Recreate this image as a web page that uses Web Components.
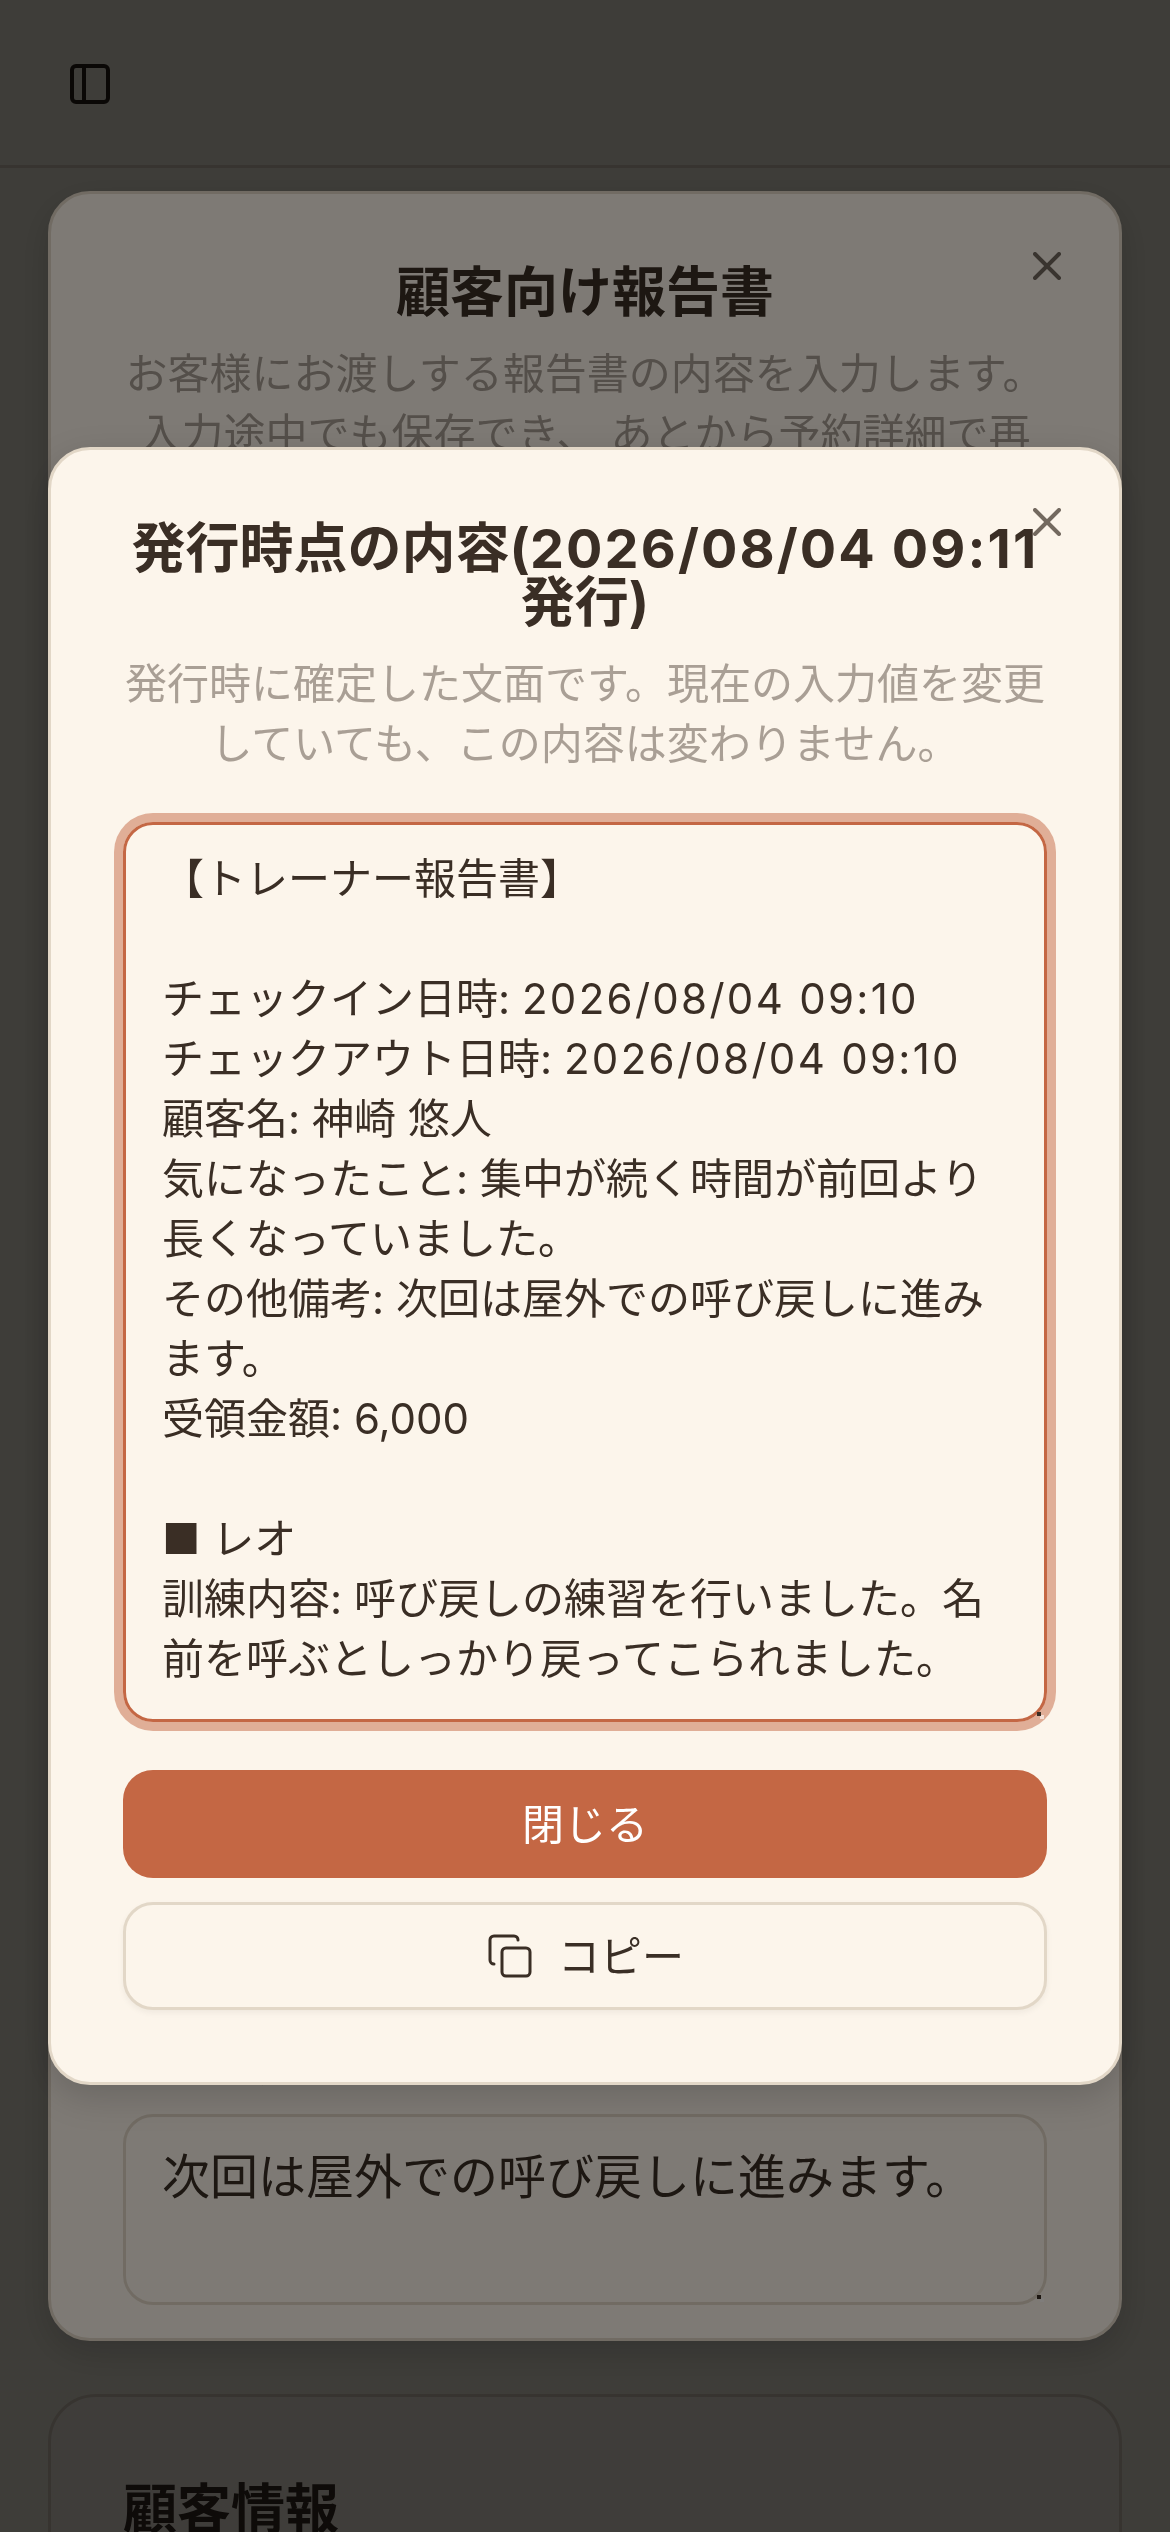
<!DOCTYPE html>
<html lang="ja">
<head>
<meta charset="utf-8">
<title>顧客向け報告書</title>
<style>
  html, body { margin: 0; height: 100%; }
  body {
    background: #faf6e6;
    color: #3a2e25;
    font-family: Inter, "Noto Sans CJK JP", sans-serif;
    overflow: hidden;
  }
  /* 日時の数字だけ少し広げる */
  .dt { letter-spacing: 2.3px; }
</style>
</head>
<body>
<app-bar></app-bar>

<page-main>
  <section-card title-text="顧客情報"></section-card>
</page-main>

<!-- 下のダイアログ -->
<modal-layer>
  <report-dialog tall heading="顧客向け報告書" lead="お客様にお渡しする報告書の内容を入力します。入力途中でも保存でき、 あとから予約詳細で再度確認できます。">
    <note-field label="その他備考">次回は屋外での呼び戻しに進みます。</note-field>
  </report-dialog>
</modal-layer>

<!-- 上のダイアログ -->
<modal-layer>
  <report-dialog heading='発行時点の内容(<span style="letter-spacing:2.1px">2026/08/04 09:11</span> 発行)' lead="発行時に確定した文面です。現在の入力値を変更していても、この内容は変わりません。">
    <snapshot-box>【トレーナー報告書】

チェックイン日時: <span class="dt">2026/08/04 09:10</span>
チェックアウト日時: <span class="dt">2026/08/04 09:10</span>
顧客名: 神崎 悠人
気になったこと: 集中が続く時間が前回より長くなっていました。
その他備考: 次回は屋外での呼び戻しに進みます。
受領金額: 6,000

■ レオ
訓練内容: 呼び戻しの練習を行いました。名前を呼ぶとしっかり戻ってこられました。</snapshot-box>
    <action-button primary>閉じる</action-button>
    <action-button copy>コピー</action-button>
  </report-dialog>
</modal-layer>

<script>
class AppBar extends HTMLElement {
  connectedCallback() {
    this.attachShadow({ mode: 'open' }).innerHTML = `
      <style>
        :host { display: flex; align-items: center; height: 165px; padding-left: 66px; border-bottom: 3px solid #ddd2c2; }
        svg { width: 48px; height: 48px; display: block; margin-top: 3px; }
      </style>
      <svg viewBox="0 0 24 24" fill="none" stroke="#2b211a" stroke-width="2" stroke-linecap="round" stroke-linejoin="round">
        <rect x="3" y="3" width="18" height="18" rx="2"/><path d="M9 3v18"/>
      </svg>`;
  }
}

class PageMain extends HTMLElement {
  connectedCallback() {
    this.attachShadow({ mode: 'open' }).innerHTML = `
      <style>
        :host { display: block; padding: 0 48px; }
        .space { height: 2226px; }
      </style>
      <div class="space"></div>
      <slot></slot>`;
  }
}

class SectionCard extends HTMLElement {
  connectedCallback() {
    this.attachShadow({ mode: 'open' }).innerHTML = `
      <style>
        :host { display: block; background: #fcf5eb; border: 3px solid #ddd2c2; border-radius: 48px; padding: 72px; }
        h2 { margin: 0; font-size: 54px; line-height: 81px; font-weight: 700; color: #3a2e25; }
      </style>
      <h2>${this.getAttribute('title-text')}</h2>`;
  }
}

class ModalLayer extends HTMLElement {
  connectedCallback() {
    this.attachShadow({ mode: 'open' }).innerHTML = `
      <style>
        :host { position: fixed; inset: 0; display: flex; align-items: center; justify-content: center; background: rgba(0,0,0,.5); }
      </style>
      <slot></slot>`;
  }
}

class ReportDialog extends HTMLElement {
  connectedCallback() {
    const tall = this.hasAttribute('tall');
    this.attachShadow({ mode: 'open' }).innerHTML = `
      <style>
        :host {
          display: flex; flex-direction: column; position: relative; box-sizing: border-box;
          width: 1074px; ${tall ? 'height: 2150px; padding-bottom: 33px;' : 'padding-bottom: 72px;'}
          padding-top: 72px; padding-left: 72px; padding-right: 72px;
          background: #fcf5eb; border: 3px solid #e2d7c7; border-radius: 42px;
          box-shadow: 0 12px 36px rgba(0,0,0,.16);
          overflow: hidden;
        }
        h2 { margin: 0 0 24px; font-size: 54px; line-height: 54px; font-weight: 700; text-align: center; color: #3a2e25; }
        p { margin: 0 0 48px; font-size: 42px; line-height: 60px; text-align: center; color: #a99f95; }
        .close { position: absolute; top: 48px; right: 48px; width: 48px; height: 48px; opacity: .7; }
        .fill { flex: 1; }
        .stack { display: flex; flex-direction: column; }
      </style>
      <h2>${this.getAttribute('heading')}</h2>
      <p>${this.getAttribute('lead')}</p>
      ${tall ? '<div class="fill"></div>' : ''}
      <div class="stack"><slot></slot></div>
      <svg class="close" viewBox="0 0 24 24" fill="none" stroke="#3a2e25" stroke-width="2" stroke-linecap="round">
        <path d="M18 6 6 18"/><path d="m6 6 12 12"/>
      </svg>`;
  }
}

class NoteField extends HTMLElement {
  connectedCallback() {
    this.attachShadow({ mode: 'open' }).innerHTML = `
      <style>
        :host { display: block; }
        label { display: block; font-size: 42px; line-height: 60px; font-weight: 700; margin-bottom: 18px; color: #3a2e25; }
        .box { position: relative; box-sizing: border-box; height: 191px; padding: 24px 36px; border: 3px solid #e2d7c7; border-radius: 30px; font-size: 48px; line-height: 72px; color: #3a2e25; }
        .grip { position: absolute; right: 3px; bottom: 3px; width: 4px; height: 4px; background: #3a2e25; box-shadow: 3px 3px 0 rgba(255,255,255,.6); }
      </style>
      <label>${this.getAttribute('label')}</label>
      <div class="box"><slot></slot><span class="grip"></span></div>`;
  }
}

class SnapshotBox extends HTMLElement {
  connectedCallback() {
    this.attachShadow({ mode: 'open' }).innerHTML = `
      <style>
        :host {
          display: block; position: relative; box-sizing: border-box; height: 900px;
          margin-bottom: 48px; padding: 24px 36px;
          border: 3px solid #c46744; border-radius: 30px;
          box-shadow: 0 0 0 9px rgba(196,103,68,.5);
          font-size: 42px; line-height: 60px; color: #3a2e25;
        }
        .text { white-space: pre-wrap; height: 100%; overflow: hidden; }
        .grip { position: absolute; right: 3px; bottom: 3px; width: 4px; height: 4px; background: #3a2e25; box-shadow: 3px 3px 0 rgba(255,255,255,.6); }
      </style>
      <div class="text"><slot></slot></div><span class="grip"></span>`;
  }
}

class ActionButton extends HTMLElement {
  connectedCallback() {
    const primary = this.hasAttribute('primary');
    const copy = this.hasAttribute('copy');
    this.attachShadow({ mode: 'open' }).innerHTML = `
      <style>
        :host {
          display: flex; align-items: center; justify-content: center; gap: 24px;
          box-sizing: border-box; height: 108px; border-radius: 30px; font-size: 42px;
          padding-bottom: 6px;
          ${primary
            ? 'background: #c46744; color: #fff; margin-bottom: 24px;'
            : 'background: #fcf5eb; color: #3a2e25; border: 3px solid #e2d7c7; box-shadow: 0 3px 6px rgba(0,0,0,.05);'}
        }
        svg { width: 48px; height: 48px; display: block; margin-top: 6px; }
      </style>
      ${copy ? `<svg viewBox="0 0 24 24" fill="none" stroke="#3a2e25" stroke-width="1.5" stroke-linecap="round" stroke-linejoin="round">
        <rect x="8" y="8" width="14" height="14" rx="2"/>
        <path d="M4 16c-1.1 0-2-.9-2-2V4c0-1.1.9-2 2-2h10c1.1 0 2 .9 2 2"/>
      </svg>` : ''}
      <slot></slot>`;
  }
}

customElements.define('app-bar', AppBar);
customElements.define('page-main', PageMain);
customElements.define('section-card', SectionCard);
customElements.define('modal-layer', ModalLayer);
customElements.define('report-dialog', ReportDialog);
customElements.define('note-field', NoteField);
customElements.define('snapshot-box', SnapshotBox);
customElements.define('action-button', ActionButton);
</script>
</body>
</html>
